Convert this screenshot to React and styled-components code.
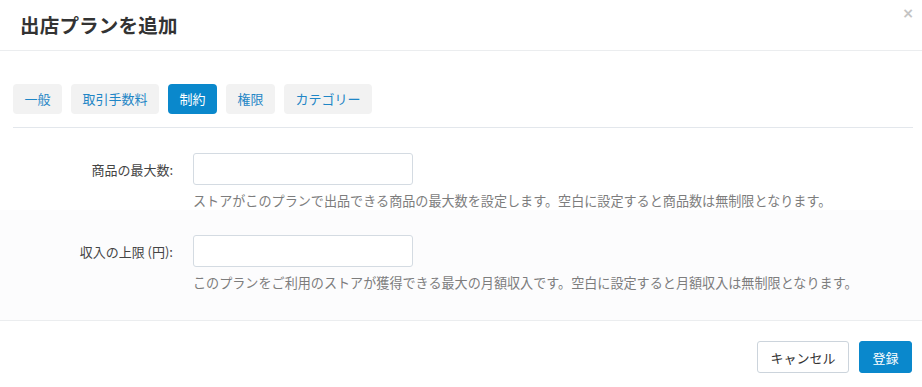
import React from "react";
import styled, { createGlobalStyle } from "styled-components";

const Global = createGlobalStyle`
  html, body { margin: 0; padding: 0; background: #fff; }
  body {
    font-family: "Noto Sans CJK JP", "Noto Sans", "Liberation Sans", sans-serif;
    font-size: 13px;
    color: #333;
  }
  * { box-sizing: border-box; }
`;

const Modal = styled.div`
  width: 922px;
  height: 387px;
  background: #fff;
  display: flex;
  flex-direction: column;
  position: relative;
`;

const Header = styled.div`
  height: 51px;
  padding: 0 20px;
  display: flex;
  align-items: center;
  border-bottom: 1px solid #ebedef;
`;

const Title = styled.h3`
  margin: 0;
  font-size: 19.5px;
  font-weight: 700;
  color: #333;
  line-height: 1;
  letter-spacing: 0.2px;
`;

const Close = styled.span`
  position: absolute;
  top: 6px;
  right: 8px;
  font-size: 14px;
  font-weight: 700;
  color: #c4c4c4;
  line-height: 1;
  font-family: "DejaVu Sans", sans-serif;
`;

const TabSection = styled.div`
  padding: 33px 9px 0 13px;
`;

const TabList = styled.div`
  display: flex;
  gap: 9px;
  padding-bottom: 13px;
  border-bottom: 1px solid #e3e7ec;
`;

const Tab = styled.button`
  height: 30px;
  padding: 0 11.5px;
  border: none;
  border-radius: 4px;
  font-family: inherit;
  font-size: 13px;
  line-height: 30px;
  background: ${(p) => (p.$active ? "#0a88cc" : "#f2f2f2")};
  color: ${(p) => (p.$active ? "#fff" : "#1f86c6")};
  cursor: pointer;
`;

const FormRow = styled.div`
  display: grid;
  grid-template-columns: 193px 220px;
  padding: 25px 0 ${(p) => (p.$last ? "28px" : "0")};
  background: ${(p) => (p.$alt ? "#fcfcfd" : "#fff")};
`;

const Label = styled.label`
  grid-column: 1;
  height: 32px;
  display: flex;
  align-items: center;
  justify-content: flex-end;
  padding-right: 20px;
  color: #444;
  font-size: 13px;
`;

const Input = styled.input`
  grid-column: 2;
  width: 220px;
  height: 32px;
  border: 1px solid #d4dbe2;
  border-radius: 3px;
  background: #fff;
  outline: none;
`;

const Help = styled.div`
  grid-column: 2;
  white-space: nowrap;
  margin-top: 6px;
  line-height: 19px;
  font-size: 13.1px;
  color: #7d7d7d;
`;

const Footer = styled.div`
  border-top: 1px solid #ebedef;
  flex: 1;
  display: flex;
  justify-content: flex-end;
  align-items: flex-start;
  gap: 10px;
  padding: 20px 10px 0 0;
`;

const Button = styled.button`
  height: 32px;
  padding: 0 12.5px;
  border-radius: 3px;
  font-family: inherit;
  font-size: 13px;
  border: 1px solid ${(p) => (p.$primary ? "#0a88cc" : "#ccd4dc")};
  background: ${(p) => (p.$primary ? "#0a88cc" : "#fff")};
  color: ${(p) => (p.$primary ? "#fff" : "#333")};
  cursor: pointer;
`;

const tabs = ["一般", "取引手数料", "制約", "権限", "カテゴリー"];

export default function App() {
  return (
    <>
      <Global />
      <Modal>
        <Header>
          <Title>出店プランを追加</Title>
        </Header>
        <Close>×</Close>
        <TabSection>
          <TabList>
            {tabs.map((t) => (
              <Tab key={t} $active={t === "制約"}>
                {t}
              </Tab>
            ))}
          </TabList>
        </TabSection>
        <FormRow>
          <Label>商品の最大数:</Label>
          <Input />
          <Help>
            ストアがこのプランで出品できる商品の最大数を設定します。空白に設定すると商品数は無制限となります。
          </Help>
        </FormRow>
        <FormRow $alt $last>
          <Label>収入の上限 (円):</Label>
          <Input />
          <Help>
            このプランをご利用のストアが獲得できる最大の月額収入です。空白に設定すると月額収入は無制限となります。
          </Help>
        </FormRow>
        <Footer>
          <Button>キャンセル</Button>
          <Button $primary>登録</Button>
        </Footer>
      </Modal>
    </>
  );
}
